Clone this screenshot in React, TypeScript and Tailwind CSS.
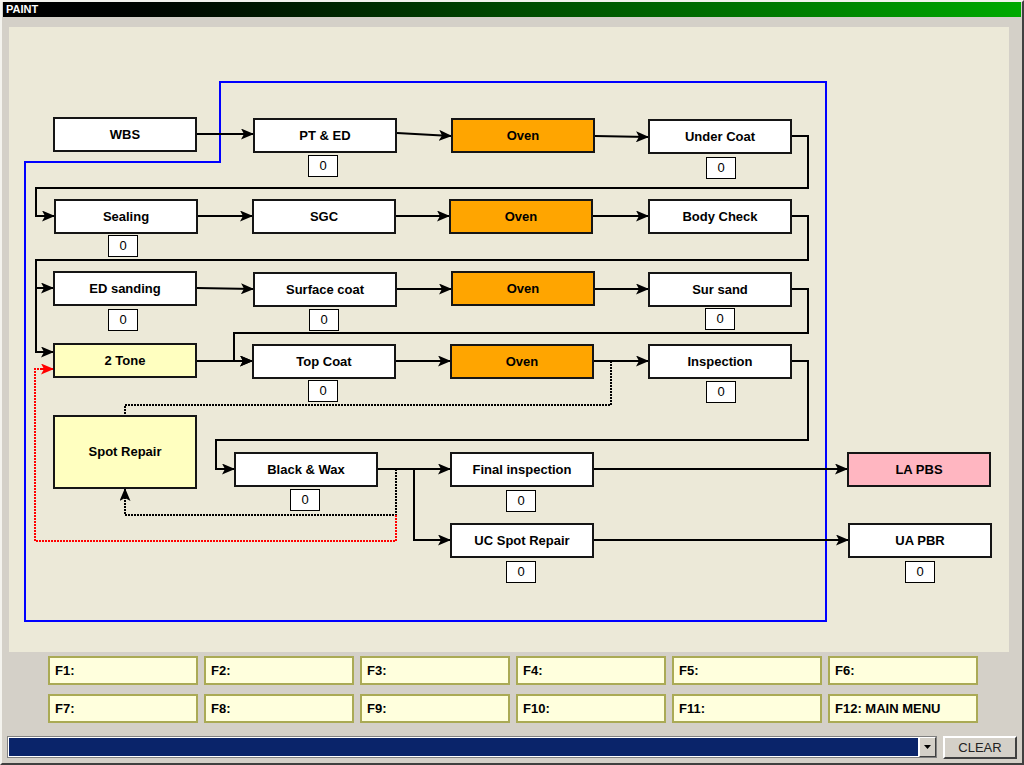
import React from "react";

type Node = { label: string; x: number; y: number; w?: number; h?: number; bg?: string };

const nodes: Node[] = [
  { label: "WBS", x: 53, y: 117 },
  { label: "PT & ED", x: 253, y: 118 },
  { label: "Oven", x: 451, y: 118, bg: "bg-[#ffa500]" },
  { label: "Under Coat", x: 648, y: 119 },
  { label: "Sealing", x: 54, y: 199 },
  { label: "SGC", x: 252, y: 199 },
  { label: "Oven", x: 449, y: 199, bg: "bg-[#ffa500]" },
  { label: "Body Check", x: 648, y: 199 },
  { label: "ED sanding", x: 53, y: 271 },
  { label: "Surface coat", x: 253, y: 272 },
  { label: "Oven", x: 451, y: 271, bg: "bg-[#ffa500]" },
  { label: "Sur sand", x: 648, y: 272 },
  { label: "2 Tone", x: 53, y: 343, bg: "bg-[#ffffc0]" },
  { label: "Top Coat", x: 252, y: 344 },
  { label: "Oven", x: 450, y: 344, bg: "bg-[#ffa500]" },
  { label: "Inspection", x: 648, y: 344 },
  { label: "Spot Repair", x: 53, y: 415, h: 74, bg: "bg-[#ffffc0]" },
  { label: "Black & Wax", x: 234, y: 452 },
  { label: "Final inspection", x: 450, y: 452 },
  { label: "UC Spot Repair", x: 450, y: 523 },
  { label: "LA PBS", x: 847, y: 452, bg: "bg-[#ffb6c1]" },
  { label: "UA PBR", x: 848, y: 523 },
];

const counters: [number, number][] = [
  [308, 155], [706, 157], [108, 235], [108, 309], [309, 309], [705, 308],
  [308, 380], [706, 381], [290, 489], [506, 490], [506, 561], [905, 561],
];

// connector paths, every one ends in an arrow head
const solid = [
  "M197,134 L253,134",
  "M397,133 L451,136",
  "M595,136 L648,137",
  "M792,136 L808,136 L808,188 L36,188 L36,216 L54,216",
  "M198,216 L252,216",
  "M396,216 L449,216",
  "M593,216 L648,216",
  "M792,216 L808,216 L808,260 L36,260 L36,352 L53,352",
  "M36,288 L53,288",
  "M197,288 L253,289",
  "M397,289 L451,289",
  "M595,289 L648,289",
  "M792,289 L808,289 L808,333 L234,333 L234,361 L252,361",
  "M197,361 L252,361",
  "M396,361 L450,361",
  "M594,361 L648,361",
  "M792,361 L808,361 L808,440 L216,440 L216,469 L234,469",
  "M378,469 L450,469",
  "M414,469 L414,540 L450,540",
  "M594,469 L847,469",
  "M594,540 L848,540",
];

const keys = ["F1:", "F2:", "F3:", "F4:", "F5:", "F6:", "F7:", "F8:", "F9:", "F10:", "F11:", "F12: MAIN MENU"];

export default function App() {
  const font = { fontFamily: '"Liberation Sans", Arial, sans-serif' };
  return (
    <div
      className="w-[1024px] h-[765px] flex flex-col bg-[#d4d0c8] border-t-2 border-l-2 border-t-[#f4f3ee] border-l-[#f4f3ee] border-r-2 border-b-2 border-r-[#404040] border-b-[#404040] overflow-hidden"
      style={font}
    >
      <div className="mx-[1px] h-[15px] bg-linear-to-r from-black via-[#004a00] to-[#00aa00] flex items-center px-[3px]">
        <span className="text-white text-[11px] font-bold leading-none">PAINT</span>
      </div>

      <div className="relative ml-[7px] mt-[10px] w-[1000px] h-[625px] bg-[#ece9d8]">
        <svg className="absolute inset-0" width={1000} height={625} viewBox="9 27 1000 625">
          <defs>
            <marker id="ah" markerUnits="userSpaceOnUse" markerWidth="13" markerHeight="11" refX="12" refY="5.5" orient="auto">
              <path d="M0,0 L13,5.5 L0,11 L3,5.5 Z" fill="#000" />
            </marker>
            <marker id="ahr" markerUnits="userSpaceOnUse" markerWidth="13" markerHeight="11" refX="12" refY="5.5" orient="auto">
              <path d="M0,0 L13,5.5 L0,11 L3,5.5 Z" fill="#ff0000" />
            </marker>
          </defs>
          <path d="M25,621 L25,162 L220,162 L220,82 L826,82 L826,621 Z" fill="none" stroke="#0000ff" strokeWidth="2" />
          {solid.map((d, i) => (
            <path key={i} d={d} fill="none" stroke="#000" strokeWidth="2" markerEnd="url(#ah)" />
          ))}
          <g shapeRendering="crispEdges">
            <path d="M611,361 L611,405 L125,405 L125,415" fill="none" stroke="#000" strokeWidth="2" strokeDasharray="2 1" />
            <path d="M396,469 L396,515 L125,515 L125,492" fill="none" stroke="#000" strokeWidth="2" strokeDasharray="2 1" />
            <path d="M396,515 L396,541 L35,541 L35,369 L42,369" fill="none" stroke="#ff0000" strokeWidth="2" strokeDasharray="2 1" />
          </g>
          <path d="M125,492 L125,489" fill="none" stroke="#000" strokeWidth="2" markerEnd="url(#ah)" />
          <path d="M42,369 L53,369" fill="none" stroke="#ff0000" strokeWidth="2" markerEnd="url(#ahr)" />
        </svg>

        {nodes.map((n, i) => (
          <div
            key={i}
            className={`absolute flex items-center justify-center border-2 border-[#151515] text-[13px] font-bold text-black ${n.bg ?? "bg-white"}`}
            style={{ left: n.x - 9, top: n.y - 27, width: n.w ?? 144, height: n.h ?? 35 }}
          >
            {n.label}
          </div>
        ))}

        {counters.map(([x, y], i) => (
          <div
            key={i}
            className="absolute flex items-center justify-center w-[30px] h-[22px] border border-black bg-white text-[13px] text-black"
            style={{ left: x - 9, top: y - 27 }}
          >
            0
          </div>
        ))}
      </div>

      <div className="ml-[46px] mt-[4px] grid grid-cols-[repeat(6,150px)] gap-x-[6px] gap-y-[9px]">
        {keys.map((k) => (
          <div key={k} className="h-[29px] bg-[#ffffdd] border-2 border-[#aaaa55] flex items-center pl-[5px] text-[13px] font-bold text-black">
            {k}
          </div>
        ))}
      </div>

      <div className="ml-[5px] mt-[13px] flex items-start">
        <div className="w-[930px] h-[22px] flex border border-[#808080]">
          <div className="flex-1 bg-[#0a246a] border border-white" />
          <div className="w-[17px] bg-[#d4d0c8] border border-t-white border-l-white border-r-[#404040] border-b-[#404040] flex items-center justify-center">
            <svg width="7" height="4" viewBox="0 0 7 4"><path d="M0,0 L7,0 L3.5,4 Z" fill="#000" /></svg>
          </div>
        </div>
        <div className="ml-[6px] w-[74px] h-[23px] bg-[#d4d0c8] border-2 border-t-white border-l-white border-r-[#404040] border-b-[#404040] flex items-center justify-center text-[13px] text-[#222]">
          CLEAR
        </div>
      </div>
    </div>
  );
}
